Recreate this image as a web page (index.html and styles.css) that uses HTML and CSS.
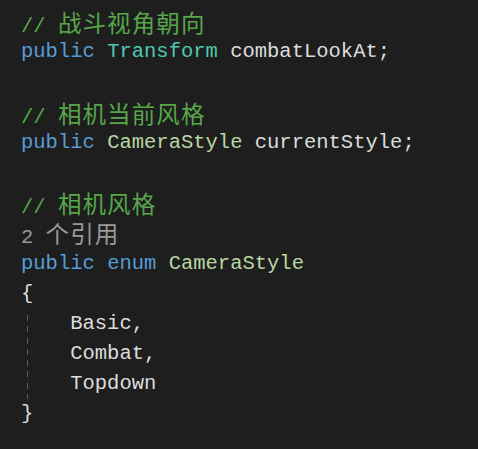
FILE: index.html
```html
<!DOCTYPE html>
<html>
<head>
<meta charset="utf-8">
<link rel="stylesheet" href="styles.css">
</head>
<body>
<div class="editor">
  <div class="line"><span class="cm">// <span class="cjk">战斗视角朝向</span></span></div>
  <div class="line"><span class="kw">public</span> <span class="ty">Transform</span> combatLookAt;</div>
  <div class="line"></div>
  <div class="line"><span class="cm">// <span class="cjk">相机当前风格</span></span></div>
  <div class="line"><span class="kw">public</span> <span class="en">CameraStyle</span> currentStyle;</div>
  <div class="line"></div>
  <div class="line"><span class="cm">// <span class="cjk">相机风格</span></span></div>
  <div class="line lens">2 <span class="cjk">个引用</span></div>
  <div class="line"><span class="kw">public</span> <span class="kw">enum</span> <span class="en">CameraStyle</span></div>
  <div class="line">{</div>
  <div class="body">
    <div class="line">    Basic,</div>
    <div class="line">    Combat,</div>
    <div class="line">    Topdown</div>
  </div>
  <div class="line">}</div>
</div>
</body>
</html>
```

FILE: styles.css
```css
html, body {
  margin: 0;
  padding: 0;
  background: #1e1e1e;
}
.editor {
  padding: 7px 0 0 21px;
  font-family: "Liberation Mono", "DejaVu Sans Mono", monospace;
  font-size: 20.5px;
  color: #dcdcdc;
}
.line {
  height: 30.2px;
  line-height: 30.2px;
  white-space: pre;
}
.cjk {
  font-family: "Noto Sans CJK SC", sans-serif;
  font-size: 23.5px;
  letter-spacing: 1.1px;
}
.cm { color: #57a64a; }
.kw { color: #569cd6; }
.ty { color: #4ec9b0; }
.en { color: #b8d7a3; }
.lens { color: #999999; }
.body {
  background-image: repeating-linear-gradient(to bottom, #5a5a5a 0 6px, transparent 6px 11.3px);
  background-size: 1px 100%;
  background-position: 6px 6px;
  background-repeat: no-repeat;
}
```
